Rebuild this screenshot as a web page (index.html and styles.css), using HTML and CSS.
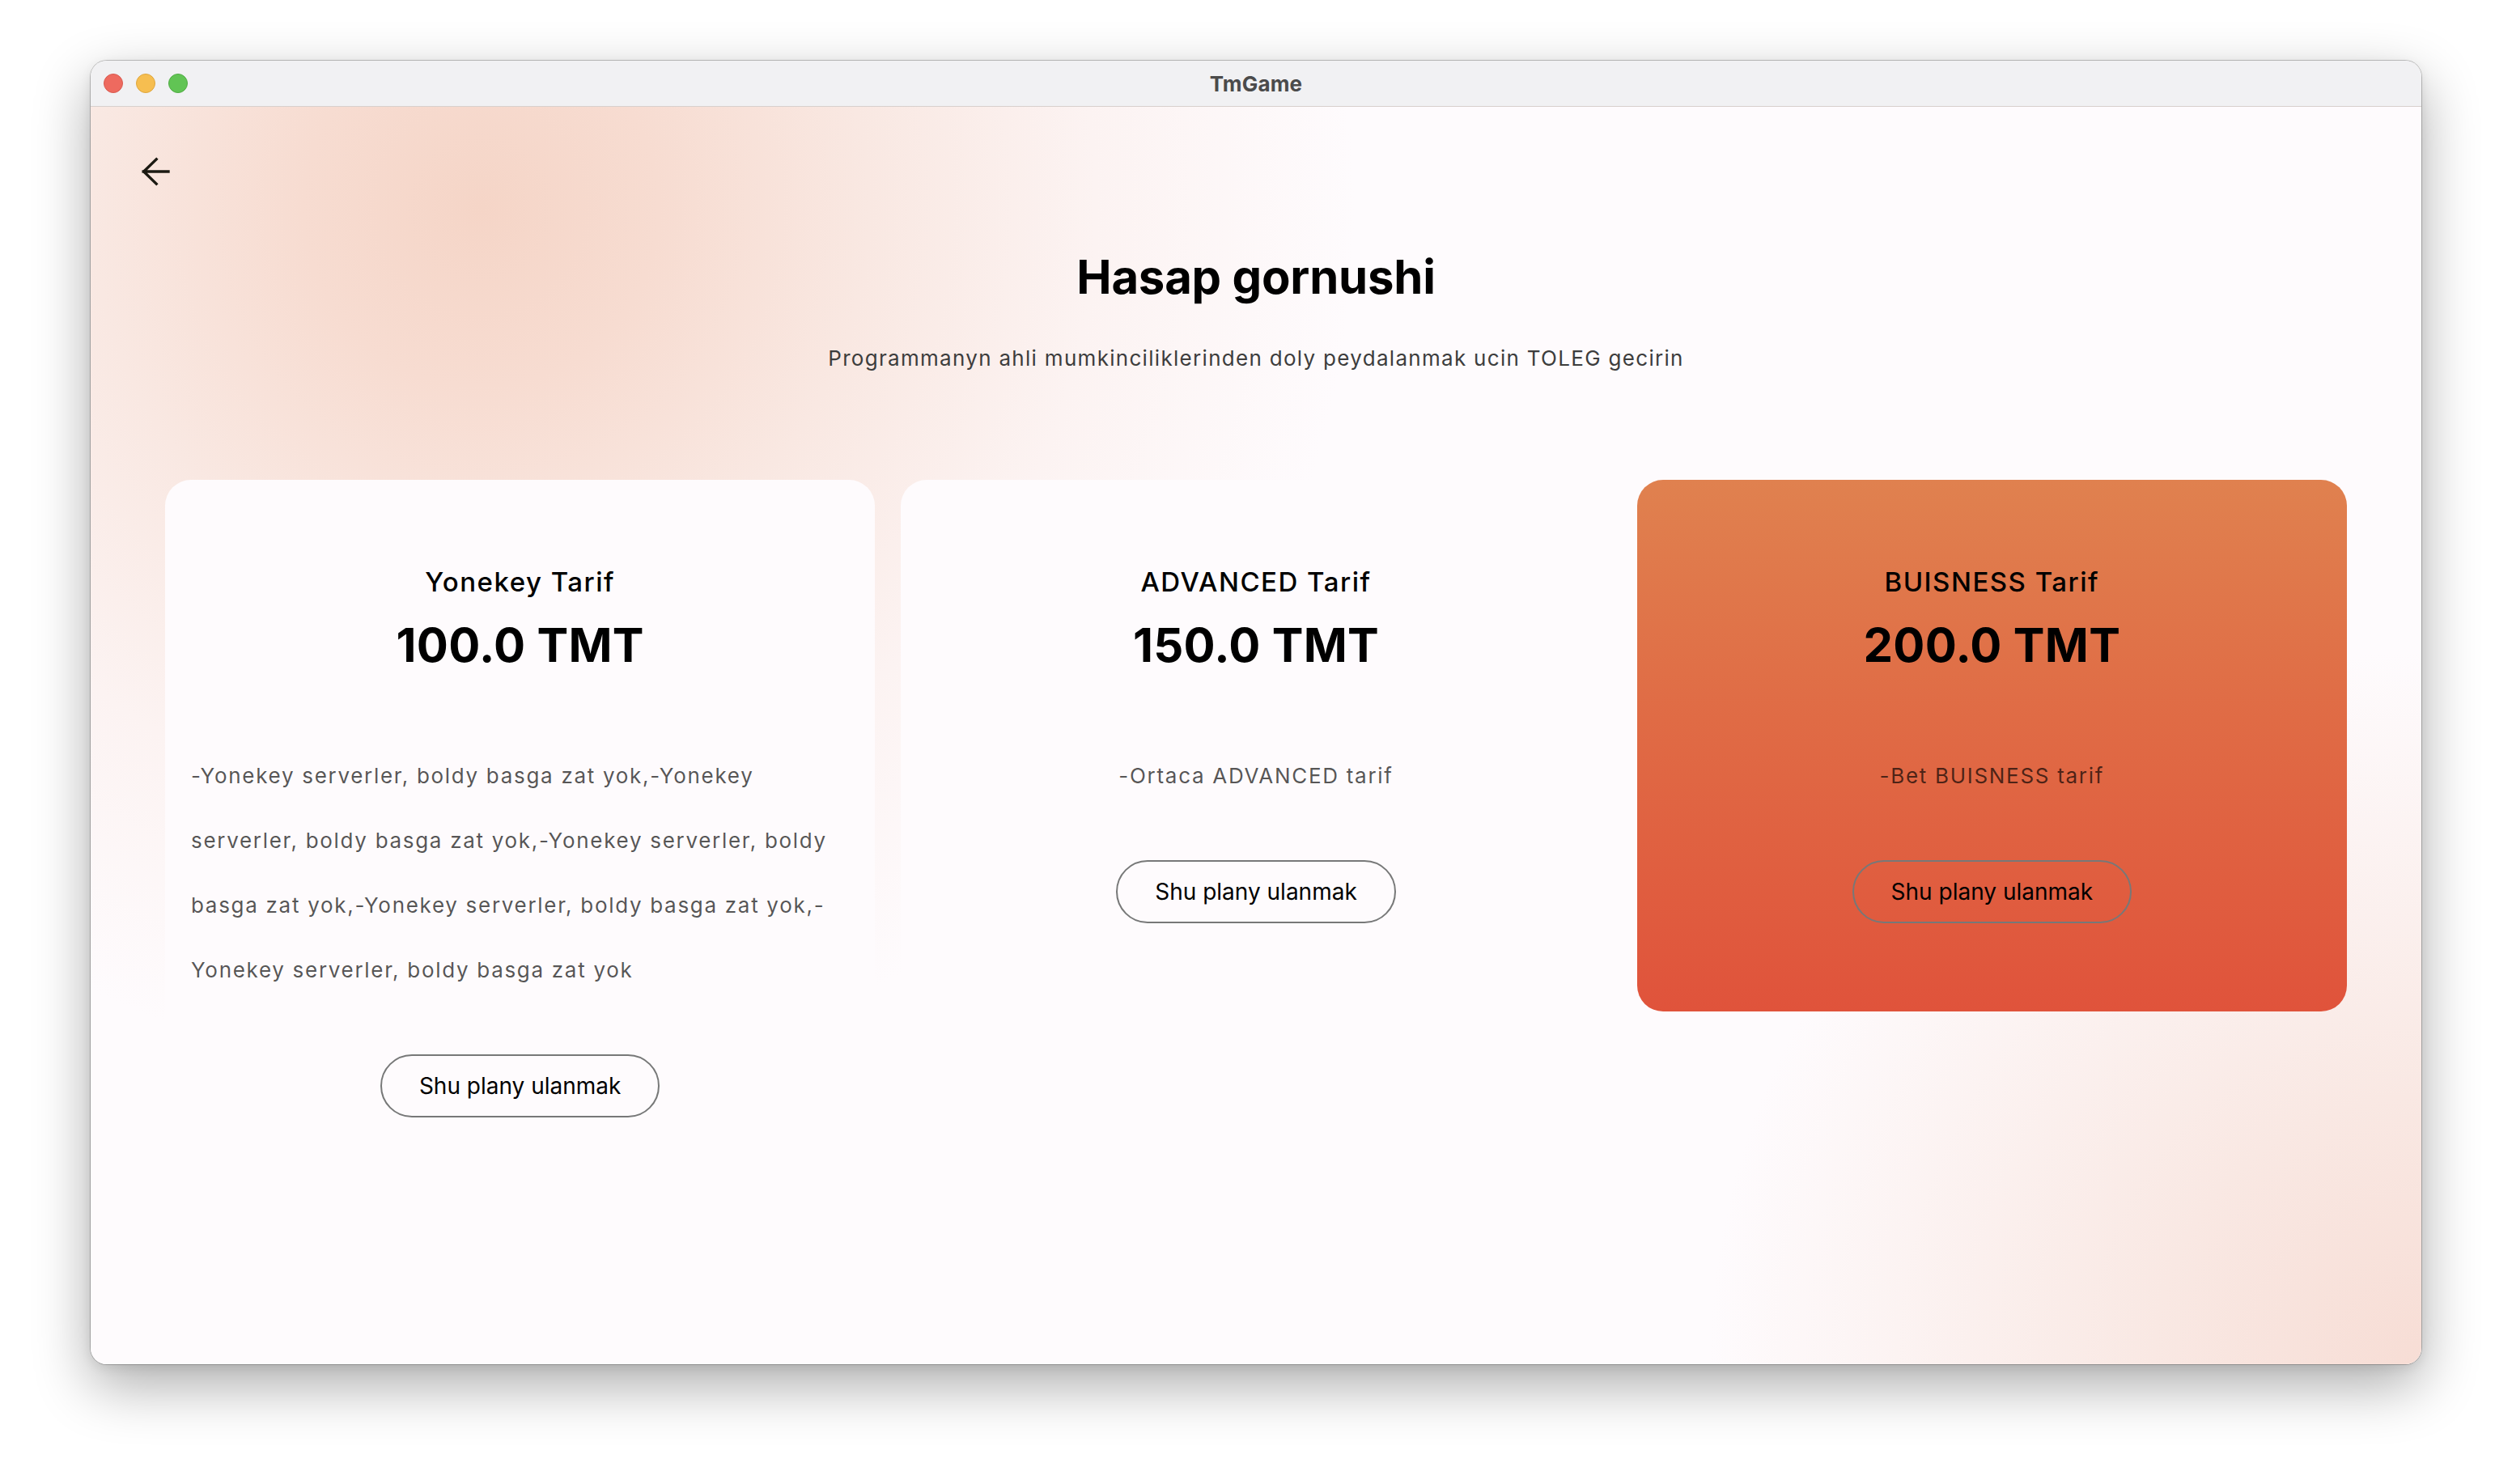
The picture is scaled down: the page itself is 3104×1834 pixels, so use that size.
FILE: index.html
```html
<!DOCTYPE html>
<html lang="tk">
<head>
<meta charset="utf-8">
<title>TmGame</title>
<link rel="stylesheet" href="styles.css">
</head>
<body>
<div class="window">
  <div class="titlebar">
    <div class="lights">
      <span class="light red"></span>
      <span class="light yellow"></span>
      <span class="light green"></span>
    </div>
    <div class="wintitle">TmGame</div>
    <div></div>
  </div>
  <div class="content">
    <div class="topbar">
      <button class="back" aria-label="Back">
        <svg viewBox="0 0 24 24" width="48" height="48"><path d="M20 12H4.6M12.6 4.4L4.8 12l7.8 7.6" fill="none" stroke="#1c1a12" stroke-width="1.7" stroke-linecap="square" stroke-linejoin="miter"/></svg>
      </button>
    </div>
    <h1 class="title">Hasap gornushi</h1>
    <p class="subtitle">Programmanyn ahli mumkinciliklerinden doly peydalanmak ucin TOLEG gecirin</p>
    <div class="plans">
      <div class="plan">
        <div class="plan-name">Yonekey Tarif</div>
        <div class="plan-price">100.0 TMT</div>
        <p class="plan-desc">-Yonekey serverler, boldy basga zat yok,-Yonekey serverler, boldy basga zat yok,-Yonekey serverler, boldy basga zat yok,-Yonekey serverler, boldy basga zat yok,-Yonekey serverler, boldy basga zat yok</p>
        <button class="plan-btn">Shu plany ulanmak</button>
      </div>
      <div class="plan">
        <div class="plan-name">ADVANCED Tarif</div>
        <div class="plan-price">150.0 TMT</div>
        <p class="plan-desc">-Ortaca ADVANCED tarif</p>
        <button class="plan-btn">Shu plany ulanmak</button>
      </div>
      <div class="plan plan-featured">
        <div class="plan-name">BUISNESS Tarif</div>
        <div class="plan-price">200.0 TMT</div>
        <p class="plan-desc">-Bet BUISNESS tarif</p>
        <button class="plan-btn">Shu plany ulanmak</button>
      </div>
    </div>
  </div>
</div>
</body>
</html>
```

FILE: styles.css
```css
html, body {
  margin: 0;
  padding: 0;
  width: 3104px;
  height: 1834px;
  overflow: hidden;
  background: #ffffff;
  font-family: "Inter", "Noto Sans", sans-serif;
}

.window {
  margin: 75px 0 0 112px;
  width: 2880px;
  height: 1611px;
  border-radius: 20px;
  overflow: hidden;
  display: flex;
  flex-direction: column;
  box-shadow: 0 0 0 1px rgba(0, 0, 0, 0.22), 0 26px 70px rgba(0, 0, 0, 0.33), 0 4px 14px rgba(0, 0, 0, 0.08);
}

.titlebar {
  height: 56px;
  flex: none;
  background: #f1f1f3;
  border-bottom: 1px solid #d8d0cd;
  display: grid;
  grid-template-columns: 1fr auto 1fr;
  align-items: center;
}

.lights {
  display: flex;
  gap: 16px;
  padding-left: 16px;
}

.light {
  width: 24px;
  height: 24px;
  border-radius: 50%;
  box-sizing: border-box;
}
.light.red { background: #ee6a5f; border: 1px solid #d85a50; }
.light.yellow { background: #f6be50; border: 1px solid #dea63d; }
.light.green { background: #61c454; border: 1px solid #51ab44; }

.wintitle {
  font-size: 26px;
  font-weight: 700;
  color: #4b4b4b;
  letter-spacing: 0.2px;
}

.content {
  flex: 1;
  background:
    radial-gradient(circle at 482px 125px, #f5d5c7 0px, #f7dcd1 220px, #f9e8e2 480px, #fcf3f2 760px, rgba(254, 251, 253, 0) 1080px),
    radial-gradient(circle at 100% 100%, #f7ddd5 0px, #f9e8e3 330px, rgba(254, 251, 253, 0) 880px),
    #fefbfd;
}

.topbar {
  padding: 56px 0 0 56px;
  height: 48px;
}

.back {
  display: block;
  width: 48px;
  height: 48px;
  padding: 0;
  border: 0;
  background: transparent;
}
.back svg { display: block; }

.title {
  margin: 71px 0 0;
  font-size: 58px;
  line-height: 70px;
  font-weight: 700;
  text-align: center;
  color: #000;
  letter-spacing: -0.2px;
}

.subtitle {
  margin: 50px 0 0;
  font-size: 26px;
  line-height: 32px;
  text-align: center;
  color: #3d3d3d;
  letter-spacing: 1.3px;
}

.plans {
  margin-top: 134px;
  padding: 0 92px;
  display: grid;
  grid-template-columns: repeat(3, 1fr);
  column-gap: 32px;
  align-items: start;
}

.plan {
  background: #fefbfd;
  border-radius: 32px;
  padding: 106px 32px 109px;
  display: flex;
  flex-direction: column;
  align-items: center;
  color: #000;
}

.plan-featured {
  background: linear-gradient(180deg, #e0814f 0%, #e06b45 45%, #e0533b 100%);
}

.plan-name {
  font-size: 33px;
  line-height: 40px;
  font-weight: 500;
  letter-spacing: 1.5px;
}

.plan-price {
  margin-top: 23px;
  font-size: 58px;
  line-height: 70px;
  font-weight: 700;
  letter-spacing: 0.3px;
}

.plan-desc {
  margin: 87px 0 0;
  max-width: 100%;
  font-size: 26px;
  line-height: 80px;
  color: rgba(0, 0, 0, 0.68);
  text-align: left;
  letter-spacing: 1.7px;
}

.plan-btn {
  margin-top: 64px;
  height: 78px;
  padding: 0 46px;
  border: 2px solid #777878;
  border-radius: 39px;
  background: transparent;
  font-family: "Inter", "Noto Sans", sans-serif;
  font-size: 28px;
  line-height: 74px;
  color: #000;
}
```
